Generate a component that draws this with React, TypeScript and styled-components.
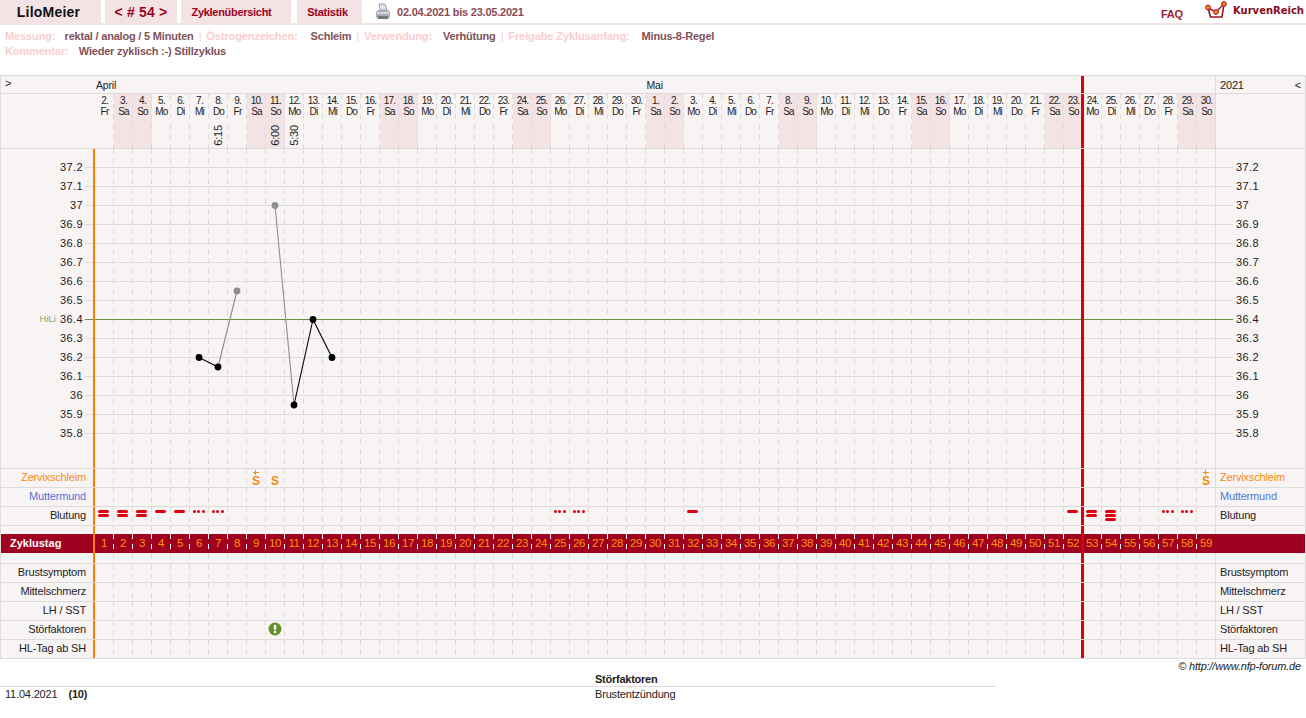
import { FC, ReactNode } from "react";
import styled, { createGlobalStyle } from "styled-components";

const GlobalStyle = createGlobalStyle`
html, body {
    margin: 0;
    background: #fff;
    font-family: "Liberation Sans", Arial, sans-serif;
    font-size: 11px;
    letter-spacing: -0.18px;
    color: #222;
}
* { box-sizing: border-box; }
`;

const GRID = "#dedbdb";
const PANEL = "#f9f4f4";
const SHADE = "#f3e3e5";
const WINE = "#a00020";
const COLS = 59;

const WEEKDAYS = ["So", "Mo", "Di", "Mi", "Do", "Fr", "Sa"];

type Day = { date: number; weekday: string; time?: string };

// 2.4.2021 ist ein Freitag, Spalte 1 des Zyklus
const days: Day[] = Array.from({ length: COLS }, (_, i) => {
    const d = new Date(2021, 3, 2 + i);
    return { date: d.getDate(), weekday: WEEKDAYS[d.getDay()] };
});
days[6].time = "6:15";
days[9].time = "6:00";
days[10].time = "5:30";

const ticks = ["37.2", "37.1", "37", "36.9", "36.8", "36.7", "36.6", "36.5", "36.4", "36.3", "36.2", "36.1", "36", "35.9", "35.8"];

const bleeding: Record<number, "dots" | 1 | 2 | 3> = {
    1: 2, 2: 2, 3: 2, 4: 1, 5: 1, 6: "dots", 7: "dots",
    25: "dots", 26: "dots", 32: 1, 52: 1, 53: 2, 54: 3, 57: "dots", 58: "dots",
};

const mucus: Record<number, boolean> = { 9: true, 10: false, 59: true };

const measurements = [
    { col: 6, value: 36.2, grey: false },
    { col: 7, value: 36.15, grey: false },
    { col: 8, value: 36.55, grey: true },
    { col: 10, value: 37, grey: true },
    { col: 11, value: 35.95, grey: false },
    { col: 12, value: 36.4, grey: false },
    { col: 13, value: 36.2, grey: false },
];

const colX = (col: number) => 95 + (col - 1) * 19 + 9;
const valueY = (v: number) => 167.5 + (37.2 - v) * 190;

const TopBar = styled.div`
    display: flex;
    align-items: stretch;
    height: 25px;
    border-bottom: 2px solid ${SHADE};
`;

const Tab = styled.a<{ $w: number; $ml?: number; $pr?: number; $size?: number; $dark?: boolean; $ls?: number }>`
    display: flex;
    align-items: center;
    justify-content: center;
    width: ${(p) => p.$w}px;
    margin-left: ${(p) => p.$ml ?? 4}px;
    padding-right: ${(p) => p.$pr ?? 0}px;
    background: ${SHADE};
    font-weight: bold;
    font-size: ${(p) => p.$size ?? 11}px;
    letter-spacing: ${(p) => p.$ls ?? -0.25}px;
    color: ${(p) => (p.$dark ? "#111" : WINE)};
`;

const PrinterSlot = styled.div`
    display: flex;
    align-items: center;
    margin-left: 13px;
`;

const DateRange = styled.span`
    align-self: center;
    margin-left: 6px;
    font-weight: bold;
    letter-spacing: -0.22px;
    color: #8c4a55;
`;

const TopRight = styled.div`
    display: flex;
    align-items: center;
    margin-left: auto;
`;

const Faq = styled.a`
    margin: 5px 22px 0 0;
    font-weight: bold;
    color: #a02236;
`;

const LogoSlot = styled.span`
    display: block;
    margin-top: -2px;
    line-height: 0;
`;

const Brand = styled.span`
    margin: -3px 2px 0 6px;
    font-family: "DejaVu Sans", sans-serif;
    font-weight: bold;
    font-size: 10px;
    letter-spacing: 0;
    color: #8a0a20;
`;

const Meta = styled.div`
    height: 50px;
    padding: 4px 5px 0;
    line-height: 15px;
    font-weight: bold;
    letter-spacing: -0.2px;
`;

const MetaLabel = styled.span<{ $gap?: number }>`
    margin-right: ${(p) => p.$gap ?? 12}px;
    letter-spacing: -0.1px;
    color: #f9cdd0;
`;

const MetaValue = styled.span`
    color: #80525a;
`;

const MetaSep = styled.span`
    margin: 0 5px;
    font-weight: normal;
    color: #f9cdd0;
`;

const Frame = styled.div`
    border: 1px solid ${GRID};
    border-bottom: 0;
    background: ${PANEL};
`;

const Row = styled.div<{ $h?: number; $flat?: boolean; $bg?: string }>`
    display: flex;
    height: ${(p) => p.$h ?? 19}px;
    border-bottom: ${(p) => (p.$flat ? "0" : `1px solid ${GRID}`)};
    background: ${(p) => p.$bg ?? "transparent"};
`;

const Label = styled.div<{ $color?: string }>`
    width: 94px;
    padding-right: 9px;
    text-align: right;
    line-height: 16px;
    white-space: nowrap;
    color: ${(p) => p.$color ?? "#222"};
`;

const Track = styled.div<{ $orange?: boolean }>`
    position: relative;
    display: flex;
    width: 1120px;
    flex: none;

    /* rote Linie = heute */
    &::after {
        content: "";
        position: absolute;
        z-index: 2;
        left: 986px;
        top: 0;
        bottom: 0;
        width: 3px;
        background: #d90012;
    }

    ${(p) =>
        p.$orange &&
        `&::before {
            content: "";
            position: absolute;
            z-index: 2;
            left: -2px;
            top: 0;
            bottom: 0;
            width: 2px;
            background: #ff8000;
        }`}
`;

const Side = styled.div<{ $color?: string }>`
    flex: 1;
    border-left: 1px solid ${GRID};
    padding-left: 4px;
    line-height: 16px;
    white-space: nowrap;
    color: ${(p) => p.$color ?? "#222"};
`;

const Cell = styled.div<{ $dash?: string; $shade?: boolean }>`
    position: relative;
    display: flex;
    flex-direction: column;
    align-items: center;
    width: 19px;
    flex: none;
    padding-right: 1px;
    background-color: ${(p) => (p.$shade ? SHADE : "transparent")};
    background-image: linear-gradient(${(p) => p.$dash ?? GRID} 50%, transparent 50%);
    background-size: 1px 10px;
    background-position: right top;
    background-repeat: repeat-y;

    &:last-child {
        width: 18px;
        padding-right: 0;
        background-image: none;
    }
`;

const MonthCell = styled.div<{ $cols: number }>`
    width: ${(p) => p.$cols * 19}px;
    padding-left: 1px;
    line-height: 18px;
    font-size: 10.5px;
`;

const Arrow = styled.div`
    width: 94px;
    padding-left: 4px;
    line-height: 15px;
`;

const YearCell = styled(Side)`
    display: flex;
    justify-content: space-between;
    padding-right: 4px;
    line-height: 18px;
`;

const DayLabel = styled.div`
    margin-left: 1px;
    padding-top: 1px;
    text-align: center;
    font-size: 10px;
    line-height: 11px;
    letter-spacing: -0.8px;
    white-space: nowrap;
`;

const TimeLabel = styled.div`
    margin-top: auto;
    margin-bottom: 2px;
    writing-mode: vertical-rl;
    transform: rotate(180deg);
    line-height: 12px;
    font-size: 11px;
`;

const ChartBody = styled(Row)`
    position: relative;
`;

const Scale = styled.div<{ $side?: boolean }>`
    flex: ${(p) => (p.$side ? "1" : "none")};
    width: ${(p) => (p.$side ? "auto" : "94px")};
    padding-top: 8px;
    border-left: ${(p) => (p.$side ? `1px solid ${GRID}` : "0")};
    padding-left: ${(p) => (p.$side ? "20px" : "0")};
`;

const Tick = styled.div<{ $side?: boolean }>`
    display: flex;
    justify-content: ${(p) => (p.$side ? "flex-start" : "flex-end")};
    align-items: center;
    height: 19px;
    padding-right: ${(p) => (p.$side ? "0" : "12px")};
    letter-spacing: 0.4px;
`;

const HiLi = styled.span`
    margin-right: 4px;
    font-size: 9.5px;
    letter-spacing: 0;
    color: #8ba173;
`;

const ChartSvg = styled.svg`
    position: absolute;
    z-index: 1;
    left: 0;
    top: 0;
`;

const Bars = styled.div`
    display: flex;
    flex-direction: column;
    gap: 1px;
    padding-top: 3px;
    padding-right: 1px;
`;

const Bar = styled.span`
    display: block;
    width: 11px;
    height: 3px;
    border-radius: 2px;
    background: #e0000f;
`;

const BloodDots = styled.div`
    display: flex;
    gap: 1.5px;
    padding-top: 3px;
    padding-right: 1px;
`;

const BloodDot = styled.span`
    width: 3px;
    height: 3px;
    border-radius: 50%;
    background: #d8000f;
`;

const MucusMark = styled.div`
    display: flex;
    flex-direction: column;
    align-items: center;
    height: 18px;
    font-weight: bold;
    font-size: 12px;
    line-height: 12px;
    letter-spacing: 0;
    color: #f48a10;
`;

/* kleines Pluszeichen über dem S, zwei Balken */
const MucusPlus = styled.span<{ $on: boolean }>`
    flex: none;
    width: 6px;
    height: 5px;
    margin: 1px 0 0;
    background:
        linear-gradient(${(p) => (p.$on ? "#f48a10" : "transparent")}, ${(p) => (p.$on ? "#f48a10" : "transparent")}) center / 6px 1px no-repeat,
        linear-gradient(${(p) => (p.$on ? "#f48a10" : "transparent")}, ${(p) => (p.$on ? "#f48a10" : "transparent")}) center / 1px 5px no-repeat;
`;

const BandLabel = styled.div`
    width: 94px;
    padding-left: 9px;
    line-height: 19px;
    font-weight: bold;
    letter-spacing: 0;
    color: #fff;
`;

const BandNumber = styled.span`
    line-height: 19px;
    font-size: 11.5px;
    letter-spacing: -0.4px;
    color: #ff9500;
`;

const BandSide = styled.div`
    flex: 1;
    border-left: 1px solid #a00020;
`;

const Credit = styled.div`
    height: 14px;
    padding-right: 5px;
    text-align: right;
    line-height: 14px;
    font-style: italic;
    letter-spacing: -0.18px;
`;

const Notes = styled.div`
    display: grid;
    grid-template-columns: 595px 401px;
    width: 996px;
    line-height: 14px;
`;

const NotesHead = styled.div`
    height: 14px;
    border-bottom: 1px solid ${GRID};
    line-height: 12px;
    font-weight: bold;
    letter-spacing: -0.25px;
`;

const NoteDate = styled.div`
    display: flex;
    gap: 11px;
    padding-left: 5px;
`;

const AlertSlot = styled.span`
    display: block;
    margin-top: 1px;
    line-height: 0;
`;

const Printer: FC = () => (
    <svg width="16" height="18" viewBox="0 0 16 18">
        <path d="M4 1 L10 1 L12 7 L5 7 Z" fill="#dbe6f2" stroke="#7f8c9a" strokeWidth="0.8" />
        <path d="M1 9 L3 7 L13 7 L15 9 L15 14 L13 16 L3 16 L1 14 Z" fill="#a9adb3" />
        <rect x="2" y="9" width="12" height="2" fill="#d7dadd" />
        <rect x="3" y="13" width="10" height="3" fill="#73787e" />
    </svg>
);

const Logo: FC = () => (
    <LogoSlot>
        <svg width="22" height="19" viewBox="0 0 22 19">
            <path d="M3 7 L5.5 16 L17 16 L19 3" fill="none" stroke="#a01020" strokeWidth="1.6" />
            <path d="M3 7 L11 11 L19 3" fill="none" stroke="#a01020" strokeWidth="1.4" />
            <circle cx="3" cy="6.5" r="2.4" fill="#f08a20" stroke="#b01020" />
            <circle cx="11" cy="11" r="2.4" fill="#f08a20" stroke="#b01020" />
            <circle cx="19" cy="3" r="2.4" fill="#f08a20" stroke="#b01020" />
        </svg>
    </LogoSlot>
);

const Alert: FC = () => (
    <AlertSlot>
        <svg width="14" height="14" viewBox="0 0 14 14">
            <circle cx="7" cy="7" r="6.5" fill="#64922f" />
            <rect x="5.8" y="2.8" width="2.4" height="5.2" rx="1" fill="#fff" />
            <circle cx="7" cy="10" r="1.3" fill="#fff" />
        </svg>
    </AlertSlot>
);

const Chart: FC = () => {
    const lines = measurements.slice(1).map((m, i) => ({ from: measurements[i], to: m }));
    return (
        <ChartSvg width="1304" height="319" viewBox="1 149 1304 319">
            {ticks.map((t, i) => (
                <line
                    key={t}
                    x1="85"
                    x2="1233"
                    y1={167.5 + i * 19}
                    y2={167.5 + i * 19}
                    stroke={t === "36.4" ? "#6f8f45" : GRID}
                />
            ))}
            {lines
                .filter((l) => l.to.col - l.from.col === 1)
                .map((l) => (
                    <line
                        key={l.to.col}
                        x1={colX(l.from.col)}
                        y1={valueY(l.from.value)}
                        x2={colX(l.to.col)}
                        y2={valueY(l.to.value)}
                        stroke={l.from.grey || l.to.grey ? "#8f8f8f" : "#000"}
                        strokeWidth="1.1"
                    />
                ))}
            {measurements.map((m) => (
                <circle key={m.col} cx={colX(m.col)} cy={valueY(m.value)} r="3.4" fill={m.grey ? "#8f8f8f" : "#000"} />
            ))}
        </ChartSvg>
    );
};

const renderBleeding = (kind: "dots" | 1 | 2 | 3) => {
    if (kind === "dots") {
        return (
            <BloodDots>
                <BloodDot />
                <BloodDot />
                <BloodDot />
            </BloodDots>
        );
    }
    return (
        <Bars>
            {Array.from({ length: kind }, (_, i) => (
                <Bar key={i} />
            ))}
        </Bars>
    );
};

type RowProps = {
    label: string;
    color?: string;
    cell?: (col: number) => ReactNode;
};

const DataRow: FC<RowProps> = ({ label, color, cell }) => (
    <Row>
        <Label $color={color}>{label}</Label>
        <Track $orange>
            {days.map((_, i) => (
                <Cell key={i}>{cell?.(i + 1)}</Cell>
            ))}
        </Track>
        <Side $color={color}>{label}</Side>
    </Row>
);

const SpacerRow: FC<{ h: number; flat?: boolean }> = ({ h, flat }) => (
    <Row $h={h} $flat={flat}>
        <Label />
        <Track $orange>
            {days.map((_, i) => (
                <Cell key={i} />
            ))}
        </Track>
        <Side />
    </Row>
);

export default function App() {
    return (
        <>
            <GlobalStyle />
            <TopBar>
                <Tab $w={101} $ml={0} $pr={4} $size={14} $dark $ls={0.2}>LiloMeier</Tab>
                <Tab $w={72} $size={14} $ls={0.2}>&lt; # 54 &gt;</Tab>
                <Tab $w={110} $pr={9} $ls={-0.3}>Zyklenübersicht</Tab>
                <Tab $w={65} $ml={6} $pr={4}>Statistik</Tab>
                <PrinterSlot>
                    <Printer />
                </PrinterSlot>
                <DateRange>02.04.2021 bis 23.05.2021</DateRange>
                <TopRight>
                    <Faq>FAQ</Faq>
                    <Logo />
                    <Brand>KurvenReich</Brand>
                </TopRight>
            </TopBar>

            <Meta>
                <div>
                    <MetaLabel $gap={9}>Messung:</MetaLabel>
                    <MetaValue>rektal / analog / 5 Minuten</MetaValue>
                    <MetaSep>|</MetaSep>
                    <MetaLabel $gap={13}>Östrogenzeichen:</MetaLabel>
                    <MetaValue>Schleim</MetaValue>
                    <MetaSep>|</MetaSep>
                    <MetaLabel $gap={11}>Verwendung:</MetaLabel>
                    <MetaValue>Verhütung</MetaValue>
                    <MetaSep>|</MetaSep>
                    <MetaLabel>Freigabe Zyklusanfang:</MetaLabel>
                    <MetaValue>Minus-8-Regel</MetaValue>
                </div>
                <div>
                    <MetaLabel $gap={10}>Kommentar:</MetaLabel>
                    <MetaValue>Wieder zyklisch :-) Stillzyklus</MetaValue>
                </div>
            </Meta>

            <Frame>
                <Row $h={18}>
                    <Arrow>&gt;</Arrow>
                    <Track>
                        <MonthCell $cols={29}>April</MonthCell>
                        <MonthCell $cols={30}>Mai</MonthCell>
                    </Track>
                    <YearCell>
                        <span>2021</span>
                        <span>&lt;</span>
                    </YearCell>
                </Row>

                <Row $h={55}>
                    <Label />
                    <Track>
                        {days.map((d) => (
                            <Cell key={`${d.date}${d.weekday}`} $shade={d.weekday === "Sa" || d.weekday === "So"}>
                                <DayLabel>
                                    {d.date}.
                                    <br />
                                    {d.weekday}
                                </DayLabel>
                                {d.time && <TimeLabel>{d.time}</TimeLabel>}
                            </Cell>
                        ))}
                    </Track>
                    <Side />
                </Row>

                <ChartBody $h={320}>
                    <Chart />
                    <Scale>
                        {ticks.map((t) => (
                            <Tick key={t}>
                                {t === "36.4" && <HiLi>HiLi</HiLi>}
                                {t}
                            </Tick>
                        ))}
                    </Scale>
                    <Track $orange>
                        {days.map((_, i) => (
                            <Cell key={i} />
                        ))}
                    </Track>
                    <Scale $side>
                        {ticks.map((t) => (
                            <Tick key={t} $side>
                                {t}
                            </Tick>
                        ))}
                    </Scale>
                </ChartBody>

                <DataRow
                    label="Zervixschleim"
                    color="#f48a10"
                    cell={(col) =>
                        col in mucus && (
                            <MucusMark>
                                <MucusPlus $on={mucus[col]} />
                                S
                            </MucusMark>
                        )
                    }
                />
                <DataRow label="Muttermund" color="#5575d8" />
                <DataRow label="Blutung" cell={(col) => bleeding[col] && renderBleeding(bleeding[col])} />
                <SpacerRow h={8} flat />

                <Row $flat $bg={WINE}>
                    <BandLabel>Zyklustag</BandLabel>
                    <Track $orange>
                        {days.map((_, i) => (
                            <Cell key={i} $dash="#fff">
                                <BandNumber>{i + 1}</BandNumber>
                            </Cell>
                        ))}
                    </Track>
                    <BandSide />
                </Row>

                <SpacerRow h={11} />
                <DataRow label="Brustsymptom" />
                <DataRow label="Mittelschmerz" />
                <DataRow label="LH / SST" />
                <DataRow label="Störfaktoren" cell={(col) => col === 10 && <Alert />} />
                <DataRow label="HL-Tag ab SH" />
            </Frame>

            <Credit>© http://www.nfp-forum.de</Credit>

            <Notes>
                <NotesHead />
                <NotesHead>Störfaktoren</NotesHead>
                <NoteDate>
                    <span>11.04.2021</span>
                    <b>(10)</b>
                </NoteDate>
                <div>Brustentzündung</div>
            </Notes>
        </>
    );
}
